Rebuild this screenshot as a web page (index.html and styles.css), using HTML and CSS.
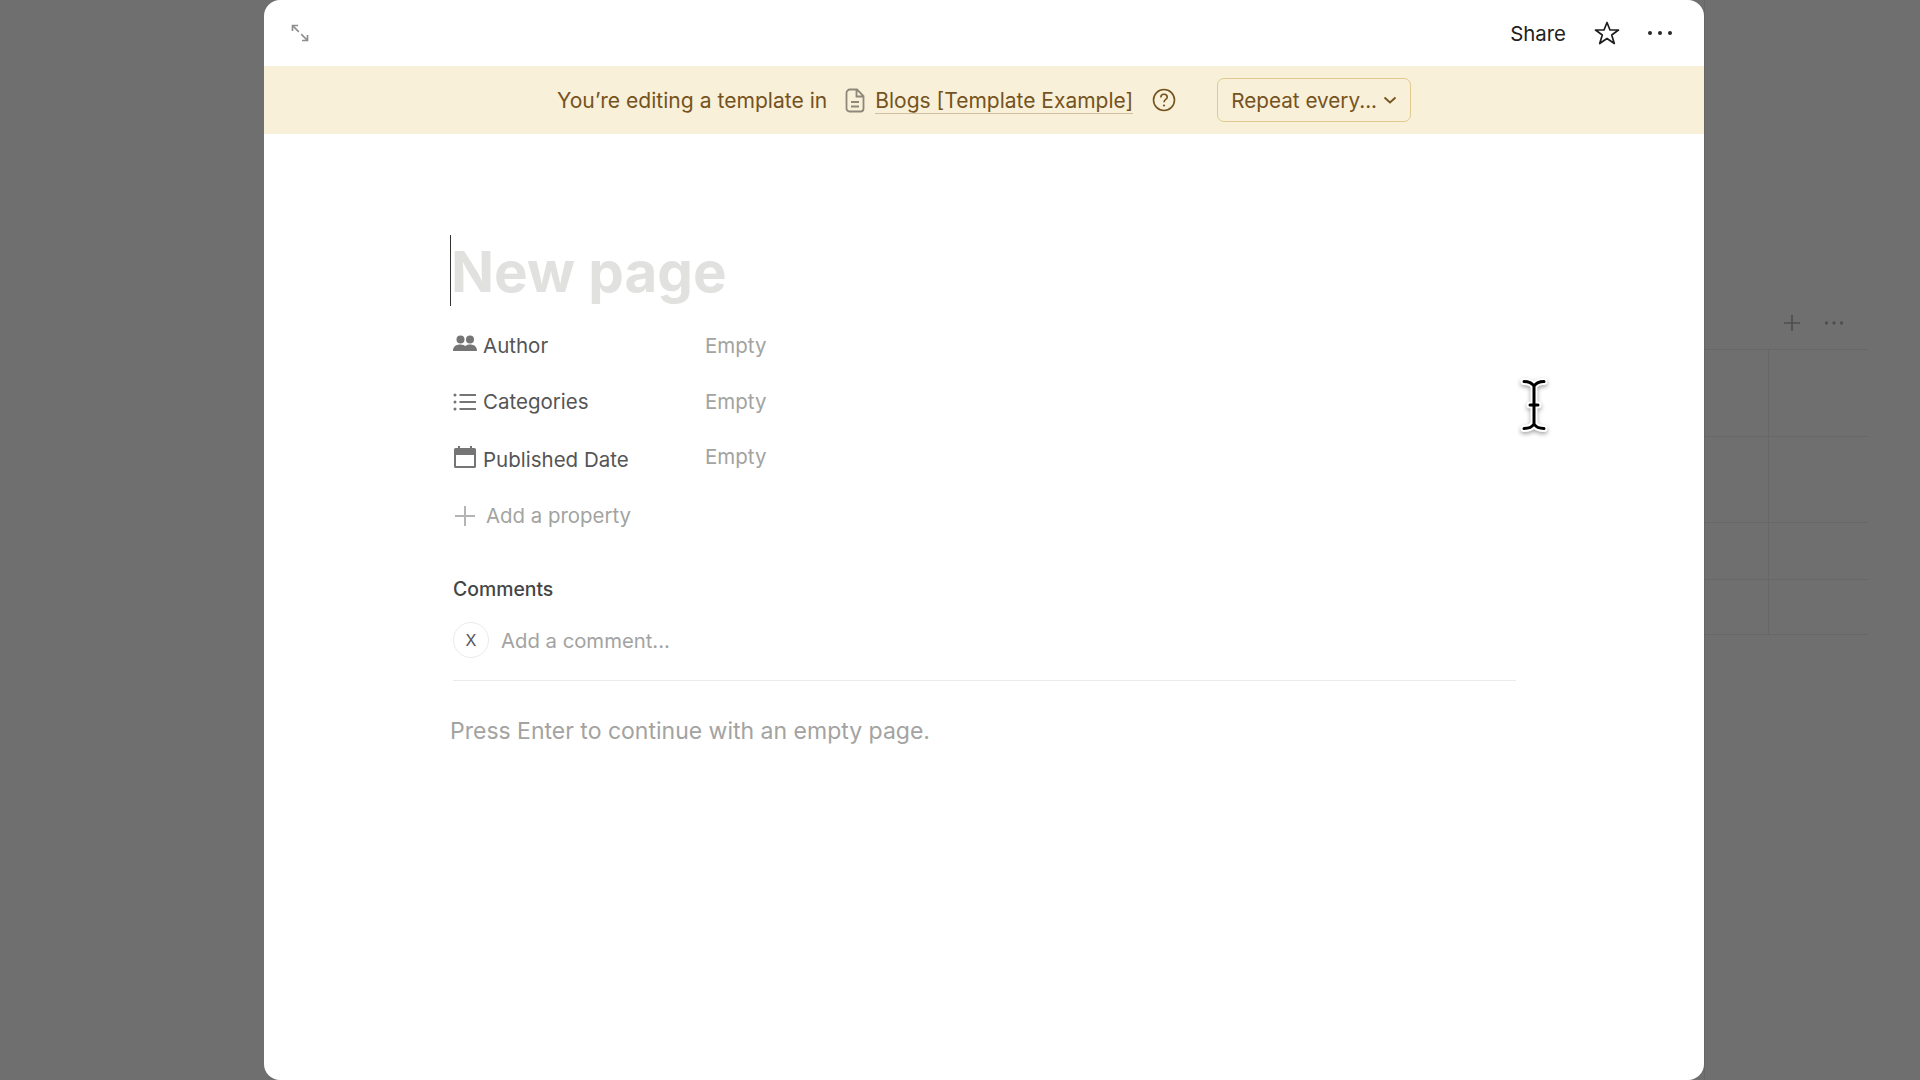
FILE: index.html
```html
<!DOCTYPE html>
<html lang="en">
<head>
<meta charset="utf-8">
<title>New page</title>
<link rel="stylesheet" href="styles.css">
</head>
<body>
<div class="screen">
  <div class="side-left"></div>
  <main class="modal">
    <header class="topbar">
      <svg class="expand" viewBox="0 0 18 18" width="18" height="18"><path d="M1.500 7V1.500H7M1.500 1.500L7.800 7.800M10.200 10.200L16.500 16.500M16.500 11V16.500H11" fill="none" stroke="#8f8f8d" stroke-width="1.700"/></svg>
      <div class="top-actions">
        <span class="share">Share</span>
        <svg class="star" viewBox="0 0 26 24" width="26" height="24"><path d="M13 1.500L16 9H24.500L17.700 14L20.300 22.500L13 17.500L5.700 22.500L8.300 14L1.500 9H10Z" fill="none" stroke="#1f1f1f" stroke-width="1.700" stroke-linejoin="round"/></svg>
        <svg class="dots" viewBox="0 0 26 6" width="26" height="6"><circle cx="3" cy="3" r="2"/><circle cx="13" cy="3" r="2"/><circle cx="23" cy="3" r="2"/></svg>
      </div>
    </header>
    <section class="banner">
      <span class="banner-text">You’re editing a template in</span>
      <svg class="doc" viewBox="0 0 20 25" width="20" height="25"><path d="M5 1.500H12L18.500 8V20.500A3 3 0 0 1 15.500 23.500H4.500A3 3 0 0 1 1.500 20.500V5A3.500 3.500 0 0 1 5 1.500ZM11.500 1.500V8.500H18.500M6 14H14M6 18.500H14" fill="none" stroke="#8e877a" stroke-width="1.800"/></svg>
      <a class="banner-link">Blogs [Template Example]</a>
      <svg class="help" viewBox="0 0 24 24" width="24" height="24"><circle cx="12" cy="12" r="10.500" fill="none" stroke="#75531f" stroke-width="1.600"/><path d="M8.800 9.500C8.800 7.500 10.300 6.300 12 6.300C13.900 6.300 15.200 7.500 15.200 9.200C15.200 11.600 12 11.400 12 14.300" fill="none" stroke="#75531f" stroke-width="1.600"/><circle cx="12" cy="17.500" r="1.100" fill="#75531f"/></svg>
      <button class="repeat"><span class="repeat-label">Repeat every...</span><svg class="chev" viewBox="0 0 14 8" width="14" height="8"><path d="M1.500 1.500L7 6.500L12.500 1.500" fill="none" stroke="#75531f" stroke-width="1.800"/></svg></button>
    </section>
    <div class="content">
      <h1 class="title">New page</h1>
      <div class="props">
        <div class="prop">
          <div class="prop-name">
            <svg class="prop-icon" viewBox="0 0 24 24" width="24" height="24"><circle cx="7.500" cy="6.500" r="4"/><circle cx="17" cy="6.500" r="4"/><path d="M0 18C0 13.500 3 11.500 7.500 11.500C10 11.500 11.500 12.300 12.200 13.200C13 12 15 11.500 17 11.500C21 11.500 24 13.500 24 18H13.500V18H0Z"/></svg>
            <span>Author</span>
          </div>
          <span class="prop-value">Empty</span>
        </div>
        <div class="prop">
          <div class="prop-name">
            <svg class="prop-icon" viewBox="0 0 24 24" width="24" height="24"><circle cx="2" cy="5" r="1.500"/><circle cx="2" cy="12" r="1.500"/><circle cx="2" cy="19" r="1.500"/><rect x="6.500" y="4" width="16.500" height="2"/><rect x="6.500" y="11" width="16.500" height="2"/><rect x="6.500" y="18" width="16.500" height="2"/></svg>
            <span>Categories</span>
          </div>
          <span class="prop-value">Empty</span>
        </div>
        <div class="prop prop-date">
          <div class="prop-name">
            <svg class="prop-icon prop-icon-up" viewBox="0 0 24 24" width="24" height="24"><path d="M5 1H7V3H17V1H19V3H21.500A1.500 1.500 0 0 1 23 4.500V21.500A1.500 1.500 0 0 1 21.500 23H2.500A1.500 1.500 0 0 1 1 21.500V4.500A1.500 1.500 0 0 1 2.500 3H5ZM3 10V21H21V10Z"/></svg>
            <span>Published Date</span>
          </div>
          <span class="prop-value">Empty</span>
        </div>
        <div class="add-prop">
          <svg class="plus" viewBox="0 0 22 22" width="22" height="22"><path d="M11 1V21M1 11H21" stroke="#b4b4b2" stroke-width="2" fill="none"/></svg>
          <span>Add a property</span>
        </div>
      </div>
      <h2 class="comments-title">Comments</h2>
      <div class="comment-row">
        <span class="avatar">X</span>
        <span class="comment-input">Add a comment...</span>
      </div>
      <hr class="divider">
      <p class="hint">Press Enter to continue with an empty page.</p>
    </div>
  </main>
  <aside class="behind">
    <div class="behind-tools">
      <svg viewBox="0 0 18 18" width="18" height="18"><path d="M9 1V17M1 9H17" stroke="#4f4f4f" stroke-width="1.700" fill="none"/></svg>
      <svg viewBox="0 0 20 4" width="20" height="4"><circle cx="2.500" cy="2" r="1.700"/><circle cx="10" cy="2" r="1.700"/><circle cx="17.500" cy="2" r="1.700"/></svg>
    </div>
    <div class="behind-table">
      <div class="b-row b-row-1"><div class="b-cell"></div></div>
      <div class="b-row b-row-2"><div class="b-cell"></div></div>
      <div class="b-row b-row-3"><div class="b-cell"></div></div>
      <div class="b-row b-row-4"><div class="b-cell"></div></div>
    </div>
  </aside>
  <svg class="cursor" viewBox="0 0 28 54" width="28" height="54">
    <path class="cursor-halo" d="M4 3.500C9 3.500 12 5 14 8C16 5 19 3.500 24 3.500M14 8V46M4 50.500C9 50.500 12 49 14 46C16 49 19 50.500 24 50.500M10 27H18"/>
    <path class="cursor-ink" d="M4 3.500C9 3.500 12 5 14 8C16 5 19 3.500 24 3.500M14 8V46M4 50.500C9 50.500 12 49 14 46C16 49 19 50.500 24 50.500M10 27H18"/>
  </svg>
</div>
</body>
</html>
```
FILE: styles.css
```css
* { box-sizing: border-box; }
html, body { margin: 0; padding: 0; height: 100%; overflow: hidden; }
body { font-family: Inter, "Liberation Sans", sans-serif; background: #6f6f6f; }
.screen { display: flex; width: 1920px; height: 1080px; position: relative; background: #6f6f6f; }
.side-left { width: 264px; flex: none; }
.modal { width: 1440px; flex: none; height: 1080px; background: #fff; border-radius: 16px; overflow: hidden; display: flex; flex-direction: column; }
.topbar { height: 66px; flex: none; display: flex; align-items: center; justify-content: space-between; padding: 0 31px 0 27px; }
.expand { display: block; }
.top-actions { display: flex; align-items: center; }
.share { font-size: 20.400px; color: #1f1f1f; margin-right: 28px; }
.star { display: block; margin-right: 27px; }
.dots { display: block; fill: #2a2a2a; }
.banner { height: 68px; flex: none; background: #f8f0d8; display: flex; align-items: center; color: #75531f; font-size: 21px; padding-left: 293px; }
.banner-text { margin-right: 18px; padding-top: 1px; font-size: 21.100px; }
.doc { display: block; margin-right: 10px; }
.banner-link { border-bottom: 1px solid #cfc2a2; line-height: 25px; margin-right: 19px; margin-top: 2px; }
.help { display: block; margin-right: 41px; }
.repeat { font: inherit; color: inherit; background: transparent; border: 1px solid #dfc98f; border-radius: 7px; height: 44px; width: 194px; padding: 0 13px; display: flex; align-items: center; justify-content: space-between; }
.repeat-label { padding-top: 1px; font-size: 20.700px; }
.chev { display: block; }
.content { padding: 0 188px 0 186px; flex: 1; }
.title { margin: 101px 0 0; padding: 2px 0 0 0; border-left: 1.500px solid #333; height: 71px; line-height: 70px; font-size: 56.500px; font-weight: 700; color: #e1e1e0; }
.props { margin-top: 11px; padding-left: 3px; }
.prop { display: flex; height: 56.500px; align-items: center; font-size: 20.500px; }
.prop-name { width: 252px; flex: none; display: flex; align-items: center; color: #555; }
.prop-icon { display: block; fill: #757575; margin-right: 6px; }
.prop-icon-up { margin-bottom: 5px; }
.prop-value { color: #a3a3a1; }
.prop-date { margin-top: 1px; }
.prop-date .prop-value { margin-bottom: 6px; }
.add-prop { display: flex; align-items: center; height: 56.500px; font-size: 20.400px; color: #a3a3a1; }
.plus { display: block; margin-right: 10px; margin-left: 1px; }
.comments-title { margin: 33px 0 0 3px; font-size: 19.400px; line-height: 24px; font-weight: 500; color: #454545; }
.comment-row { display: flex; align-items: center; margin: 21px 0 0 3px; }
.avatar { width: 36px; height: 36px; border: 1px solid #ecebea; border-radius: 50%; display: flex; align-items: center; justify-content: center; font-size: 16px; color: #555; margin-right: 12px; }
.comment-input { font-size: 20.300px; color: #a3a3a1; }
.divider { border: 0; height: 1px; background: #ecebea; margin: 22px 0 0 3px; }
.hint { margin: 35px 0 0; font-size: 23px; line-height: 30px; color: #a3a3a1; }
.behind { flex: 1; border-left: 1.500px solid #666; padding-top: 314px; }
.behind-tools { display: flex; align-items: center; gap: 23px; padding-left: 78px; height: 18px; fill: #4f4f4f; }
.behind-table { margin-top: 17px; width: 163px; border-top: 1px solid #676767; }
.b-row { border-bottom: 1px solid #676767; }
.b-cell { height: 100%; width: 64px; border-right: 1px solid #676767; }
.b-row-1 { height: 87px; }
.b-row-2 { height: 86px; }
.b-row-3 { height: 57px; }
.b-row-4 { height: 55px; }
.cursor { position: absolute; left: 1520px; top: 378px; overflow: visible; filter: drop-shadow(0 2px 2px rgba(0,0,0,.35)); }
.cursor-halo { fill: none; stroke: #fff; stroke-width: 7; stroke-linecap: round; }
.cursor-ink { fill: none; stroke: #000; stroke-width: 3; stroke-linecap: round; }
```
